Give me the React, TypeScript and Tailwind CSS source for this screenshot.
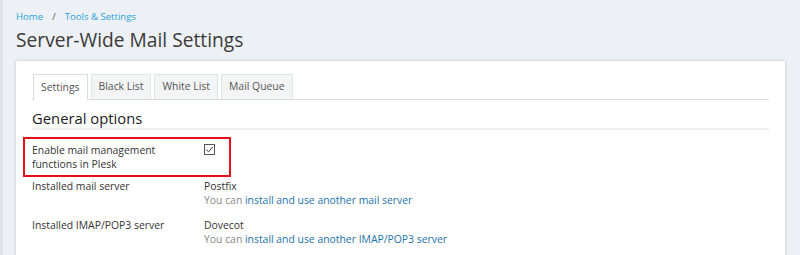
export default function App() {
  const tabs = ['Settings', 'Black List', 'White List', 'Mail Queue'];

  return (
    <div
      className="w-[800px] h-[255px] overflow-hidden bg-[#edf0f4] border-l-[3px] border-[#dfe2e6] text-[#333]"
      style={{ fontFamily: '"Open Sans", Arial, sans-serif' }}
    >
      <div className="pl-[13px] pr-[15px] pt-[9px]">
        <div className="flex items-center gap-[9px] text-[9.6px] text-[#2aa4dc] leading-[16px]">
          <span>Home</span>
          <span className="text-[#555]">/</span>
          <span>Tools &amp; Settings</span>
        </div>
        <h1 className="mt-[3px] text-[19.2px] leading-[24px] text-[#3a3a3a]">Server-Wide Mail Settings</h1>

        <div className="mt-[9px] bg-white shadow-[0_0_3px_rgba(0,0,0,0.2)] pl-[16px] pr-[16px] pt-[13px] pb-[20px]">
          <div className="flex gap-[3px] border-b border-[#dcdcdc] pl-[1px]">
            {tabs.map((t, i) => (
              <div
                key={t}
                className={
                  i === 0
                    ? 'h-[26px] px-[7px] flex items-center text-[10.4px] text-[#555] bg-white border border-b-0 border-[#dcdcdc] -mb-px'
                    : 'h-[25px] px-[7px] flex items-center text-[10.4px] text-[#555] bg-[#f3f4f6] border border-b-0 border-[#e2e3e5]'
                }
              >
                {t}
              </div>
            ))}
          </div>

          <h2 className="mt-[9px] pb-[1px] text-[14.8px] leading-[18px] text-[#222] border-b-2 border-[#eeeeee]">
            General options
          </h2>

          <div className="mt-[7px] -ml-[9px] w-[208px] h-[40px] border-2 border-[#e8101a] flex pl-[7px] pt-[4px]">
            <div className="w-[172px] pr-[24px] text-[10.4px] leading-[14px]">
              Enable mail management functions in Plesk
            </div>
            <div className="mt-[1px] w-[11px] h-[11px] border border-[#555] flex items-center justify-center">
              <svg viewBox="0 0 10 10" className="w-[9px] h-[9px]">
                <path d="M1.5 5.2 L4 7.5 L8.8 2" fill="none" stroke="#333" strokeWidth="1.1" />
              </svg>
            </div>
          </div>

          <div className="mt-[2px] flex text-[10.4px] leading-[14px]">
            <div className="w-[172px]">Installed mail server</div>
            <div>
              <div>Postfix</div>
              <div className="text-[#888]">
                You can <span className="text-[#1d72a8]">install and use another mail server</span>
              </div>
            </div>
          </div>

          <div className="mt-[11px] flex text-[10.4px] leading-[14px]">
            <div className="w-[172px]">Installed IMAP/POP3 server</div>
            <div>
              <div>Dovecot</div>
              <div className="text-[#888]">
                You can <span className="text-[#1d72a8]">install and use another IMAP/POP3 server</span>
              </div>
            </div>
          </div>
        </div>
      </div>
    </div>
  );
}
